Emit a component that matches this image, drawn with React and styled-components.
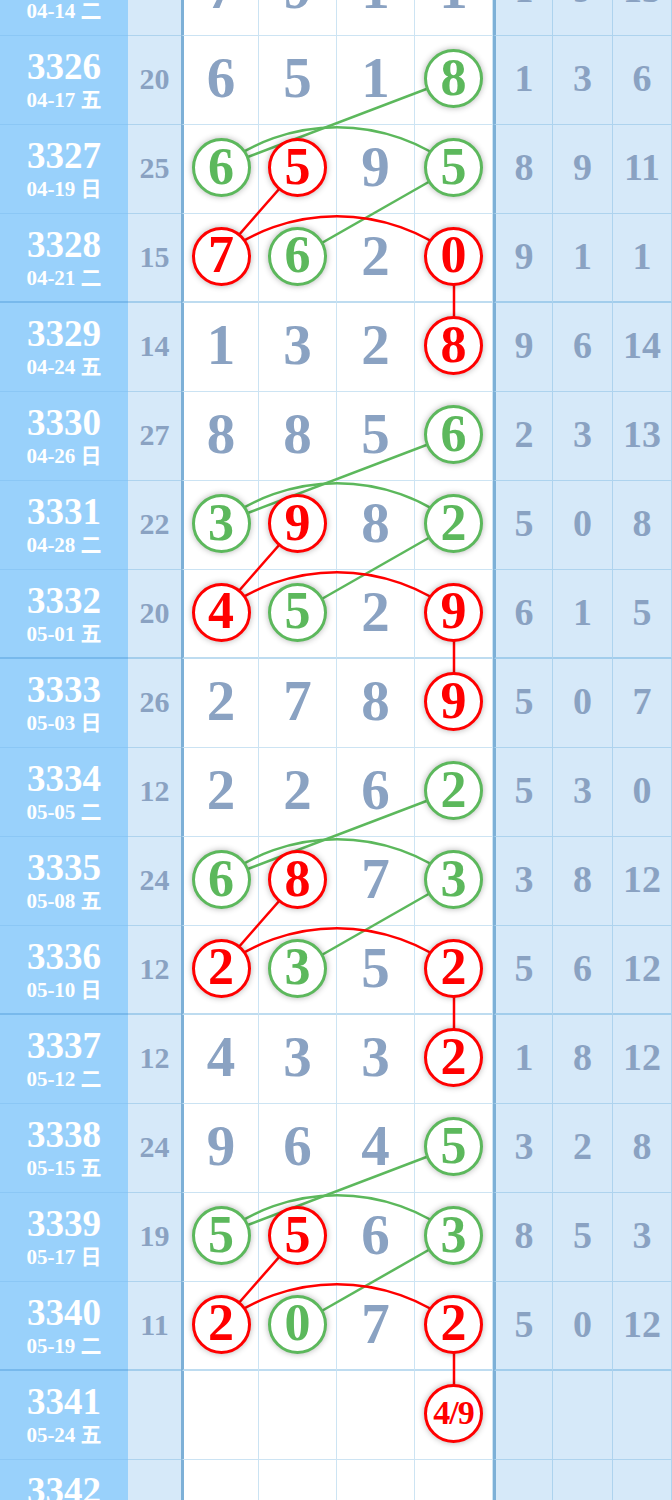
import styled, { createGlobalStyle } from "styled-components";

const GlobalStyle = createGlobalStyle`
  html, body {
    margin: 0;
    padding: 0;
    background: #ffffff;
    overflow: hidden;
  }
  body {
    font-family: "Liberation Serif", "Noto Sans CJK SC", serif;
  }
`;

const ROW_H = 89;
const GREEN = "#5cb85c";
const RED = "#ff0000";
const COL_X = [220, 298, 376, 454];

// rows 3325 .. 3342
const rows = [
  { no: "3325", date: "04-14 二", sum: "18", main: ["7", "9", "1", "1"], side: ["1", "9", "13"] },
  { no: "3326", date: "04-17 五", sum: "20", main: ["6", "5", "1", "8"], side: ["1", "3", "6"] },
  { no: "3327", date: "04-19 日", sum: "25", main: ["6", "5", "9", "5"], side: ["8", "9", "11"] },
  { no: "3328", date: "04-21 二", sum: "15", main: ["7", "6", "2", "0"], side: ["9", "1", "1"] },
  { no: "3329", date: "04-24 五", sum: "14", main: ["1", "3", "2", "8"], side: ["9", "6", "14"] },
  { no: "3330", date: "04-26 日", sum: "27", main: ["8", "8", "5", "6"], side: ["2", "3", "13"] },
  { no: "3331", date: "04-28 二", sum: "22", main: ["3", "9", "8", "2"], side: ["5", "0", "8"] },
  { no: "3332", date: "05-01 五", sum: "20", main: ["4", "5", "2", "9"], side: ["6", "1", "5"] },
  { no: "3333", date: "05-03 日", sum: "26", main: ["2", "7", "8", "9"], side: ["5", "0", "7"] },
  { no: "3334", date: "05-05 二", sum: "12", main: ["2", "2", "6", "2"], side: ["5", "3", "0"] },
  { no: "3335", date: "05-08 五", sum: "24", main: ["6", "8", "7", "3"], side: ["3", "8", "12"] },
  { no: "3336", date: "05-10 日", sum: "12", main: ["2", "3", "5", "2"], side: ["5", "6", "12"] },
  { no: "3337", date: "05-12 二", sum: "12", main: ["4", "3", "3", "2"], side: ["1", "8", "12"] },
  { no: "3338", date: "05-15 五", sum: "24", main: ["9", "6", "4", "5"], side: ["3", "2", "8"] },
  { no: "3339", date: "05-17 日", sum: "19", main: ["5", "5", "6", "3"], side: ["8", "5", "3"] },
  { no: "3340", date: "05-19 二", sum: "11", main: ["2", "0", "7", "2"], side: ["5", "0", "12"] },
  { no: "3341", date: "05-24 五", sum: "", main: ["", "", "", "4/9"], side: ["", "", ""] },
  { no: "3342", date: "05-26 日", sum: "", main: ["", "", "", ""], side: ["", "", ""] },
];

const groupStarts = [1, 5, 9, 13];

// which cells are circled, by offset inside a group of four rows
const groupMarks = [
  { 3: "g" },
  { 0: "g", 1: "r", 3: "g" },
  { 0: "r", 1: "g", 3: "r" },
  { 3: "r" },
];

const markFor = (rowIdx, col) => {
  for (const g of groupStarts) {
    const off = rowIdx - g;
    if (off >= 0 && off < 4) return groupMarks[off][col];
  }
  return undefined;
};

const cy = (i) => i * ROW_H + 42.5;

const Page = styled.div`
  overflow: hidden;
  height: 1500px;
`;

const Table = styled.div`
  position: relative;
  isolation: isolate;
  margin-top: -53px;
`;

const Row = styled.div`
  display: grid;
  grid-template-columns: 128px 53px repeat(4, 78px) 60px 60px 1fr;
  height: ${ROW_H}px;
`;

const Cell = styled.div`
  box-sizing: border-box;
  display: flex;
  align-items: center;
  justify-content: center;
  border-bottom: ${(p) => (p.$thick ? "3px solid rgba(60,150,210,0.33)" : "1px solid rgba(60,150,210,0.26)")};
  margin-bottom: ${(p) => (p.$thick ? "-1px" : "0")};
`;

const IssueCell = styled(Cell)`
  flex-direction: column;
  gap: 4px;
  background: #99d1fb;
  color: #ffffff;
  border-bottom-color: ${(p) => (p.$thick ? "rgba(60,140,210,0.35)" : "rgba(60,140,210,0.14)")};
`;

const IssueNo = styled.div`
  font-size: 37px;
  line-height: 36px;
  font-weight: 700;
`;

const IssueDate = styled.div`
  font-size: 21px;
  line-height: 22px;
  font-weight: 700;
`;

const SumCell = styled(Cell)`
  background: #d6e9f9;
  color: #8aa2c2;
  font-size: 30px;
  font-weight: 700;
  padding-bottom: 2px;
`;

const MainCell = styled(Cell)`
  background: #ffffff;
  color: #8aa2c2;
  font-size: 57px;
  font-weight: 700;
  border-right: 1px solid rgba(60,150,210,0.26);
  border-left: ${(p) => (p.$first ? "3px solid #7db0d7" : "none")};
  padding-bottom: 5px;
`;

const SideCell = styled(Cell)`
  background: #d6e9f9;
  color: #8aa2c2;
  font-size: 38px;
  font-weight: 700;
  border-right: 1px solid rgba(60,150,210,0.26);
  border-left: ${(p) => (p.$first ? "3px solid #7db0d7" : "none")};
  padding-bottom: 4px;
`;

const Ball = styled.div`
  position: relative;
  z-index: 2;
  box-sizing: border-box;
  width: 59px;
  height: 59px;
  margin-bottom: -2px;
  border-radius: 50%;
  background: #ffffff;
  border: 3px solid ${(p) => (p.$red ? RED : GREEN)};
  color: ${(p) => (p.$red ? RED : GREEN)};
  box-shadow: 0 0 6px rgba(0, 0, 0, 0.3);
  display: flex;
  align-items: center;
  justify-content: center;
  font-size: ${(p) => (p.$small ? "34px" : "52px")};
  letter-spacing: ${(p) => (p.$small ? "-1px" : "0")};
  font-weight: 700;
  line-height: 1;
  padding-bottom: 2px;
`;

const Lines = styled.svg`
  position: absolute;
  left: 0;
  top: 0;
  z-index: 1;
  pointer-events: none;
`;

const GroupLines = ({ g }) => {
  const [a, b, c, d] = COL_X;
  const y0 = cy(g);
  const y1 = cy(g + 1);
  const y2 = cy(g + 2);
  const y3 = cy(g + 3);
  return (
    <g fill="none" strokeWidth="2.5">
      <path stroke={GREEN} d={`M ${d} ${y0} L ${a} ${y1}`} />
      <path stroke={GREEN} d={`M ${a} ${y1} A 190 190 0 0 1 ${d} ${y1}`} />
      <path stroke={GREEN} d={`M ${d} ${y1} L ${b} ${y2}`} />
      <path stroke={RED} d={`M ${b} ${y1} L ${a} ${y2}`} />
      <path stroke={RED} d={`M ${a} ${y2} A 190 190 0 0 1 ${d} ${y2}`} />
      <path stroke={RED} d={`M ${d} ${y2} L ${d} ${y3}`} />
    </g>
  );
};

const App = () => {
  return (
    <Page>
      <GlobalStyle />
      <Table>
        {rows.map((r, i) => {
          // the thick rule sits under 3324, 3328, 3332 ...
          const thick = (Number(r.no) - 3324) % 4 === 0;
          return (
            <Row key={r.no}>
              <IssueCell $thick={thick}>
                <IssueNo>{r.no}</IssueNo>
                <IssueDate>{r.date}</IssueDate>
              </IssueCell>
              <SumCell $thick={thick}>{r.sum}</SumCell>
              {r.main.map((v, c) => {
                const m = markFor(i, c);
                return (
                  <MainCell key={c} $thick={thick} $first={c === 0}>
                    {m ? (
                      <Ball $red={m === "r"} $small={v.length > 1}>
                        {v}
                      </Ball>
                    ) : (
                      v
                    )}
                  </MainCell>
                );
              })}
              {r.side.map((v, c) => (
                <SideCell key={c} $thick={thick} $first={c === 0}>
                  {v}
                </SideCell>
              ))}
            </Row>
          );
        })}
        <Lines width="672" height={rows.length * ROW_H}>
          {groupStarts.map((g) => (
            <GroupLines key={g} g={g} />
          ))}
        </Lines>
      </Table>
    </Page>
  );
};

export default App;
